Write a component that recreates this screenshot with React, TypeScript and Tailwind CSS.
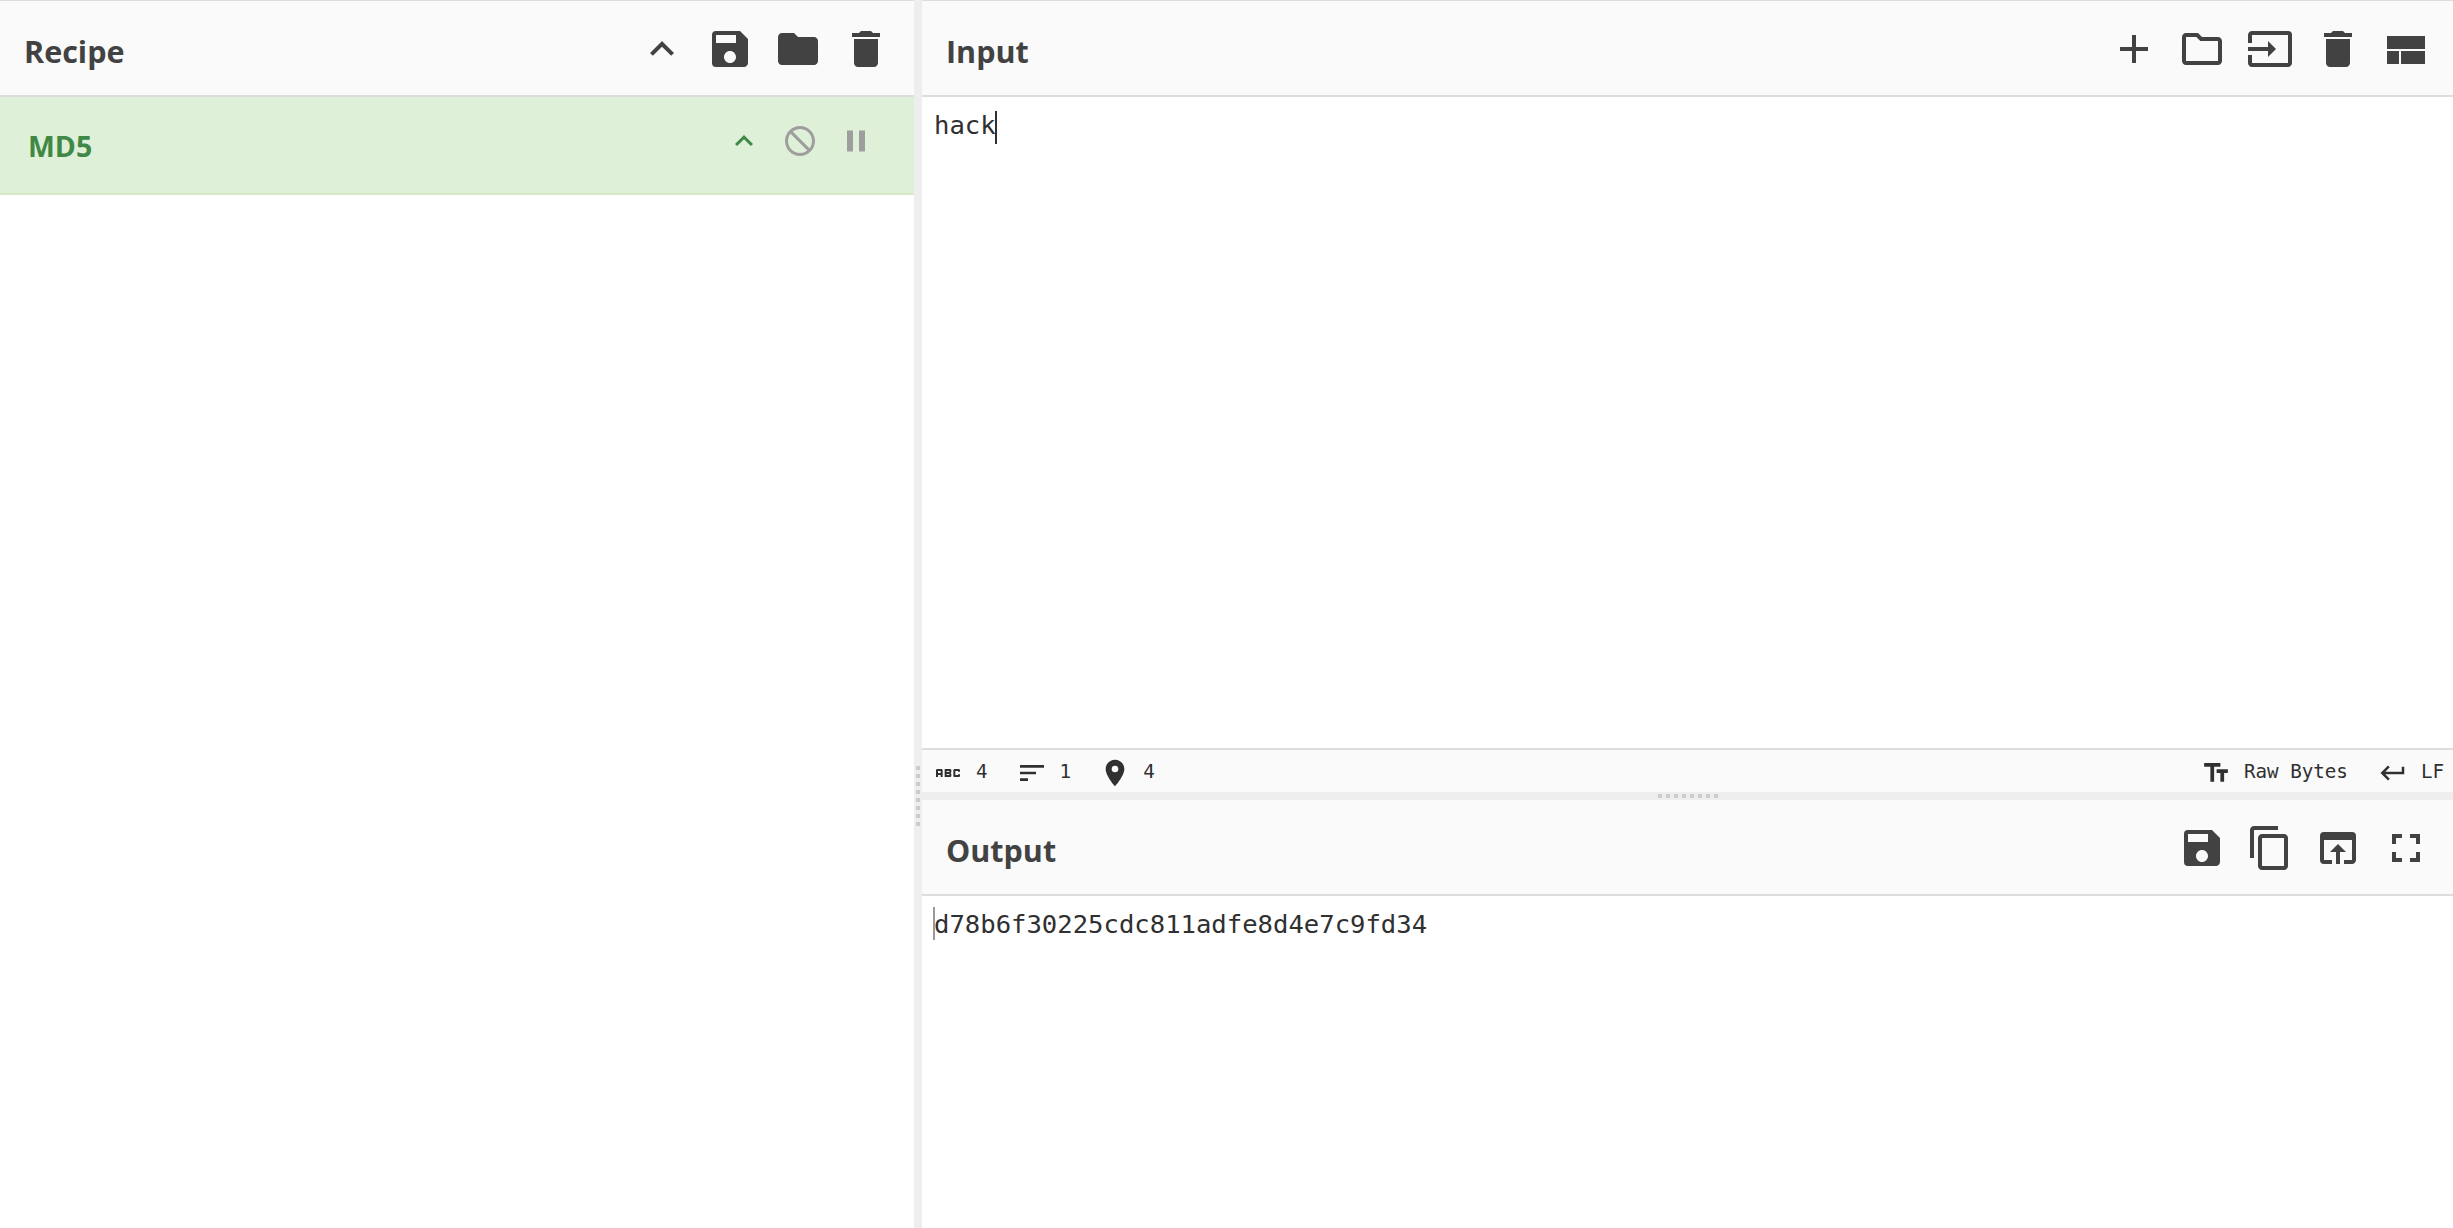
import type { ReactNode } from 'react';
import {
  MdAbc,
  MdAdd,
  MdContentCopy,
  MdDelete,
  MdDoNotDisturb,
  MdFolder,
  MdFullscreen,
  MdInput,
  MdKeyboardArrowUp,
  MdKeyboardReturn,
  MdLocationOn,
  MdOpenInBrowser,
  MdOutlineFolder,
  MdPause,
  MdSave,
  MdSort,
  MdTextFields,
} from 'react-icons/md';

const monoFont = "font-['DejaVu_Sans_Mono',monospace]";

function LayoutIcon() {
  return (
    <svg width="48" height="48" viewBox="0 0 48 48" fill="currentColor">
      <rect x="5" y="11" width="38" height="13" />
      <rect x="5" y="26" width="12" height="13" />
      <rect x="19" y="26" width="24" height="13" />
    </svg>
  );
}

function PanelHeader({ title, children, pr = 'pr-[23px]' }: { title: string; children: ReactNode; pr?: string }) {
  return (
    <div className={`flex h-[96px] items-center justify-between border-b-2 border-[#ddd] bg-[#fafafa] pl-[24px] pt-[1px] text-[#424242] ${pr}`}>
      <h2 className="pt-[6px] font-['Open_Sans',sans-serif] text-[30.5px] font-bold">{title}</h2>
      <div className="flex gap-[20px]">{children}</div>
    </div>
  );
}

function Stat({ icon, value }: { icon: ReactNode; value: string }) {
  return (
    <div className="flex items-center gap-[12px]">
      {icon}
      <span>{value}</span>
    </div>
  );
}

export default function App() {
  return (
    <div className="flex h-[1228px] w-[2453px] overflow-hidden bg-white text-[#303030]">
      <div className="flex w-[914px] flex-col border-t border-[#ddd]">
        <PanelHeader title="Recipe" pr="pr-[24px]">
          <MdKeyboardArrowUp size={48} />
          <MdSave size={48} />
          <MdFolder size={48} />
          <MdDelete size={48} />
        </PanelHeader>
        <div className="flex h-[98px] items-center justify-between border-b-2 border-[#d4e8c8] bg-[#dff0d8] pl-[28px] pr-[40px]">
          <span className="pt-[2px] font-['Open_Sans',sans-serif] text-[28.5px] font-bold text-[#408845]">MD5</span>
          <div className="-mt-[8px] flex gap-[20px] text-[#9e9e9e]">
            <MdKeyboardArrowUp size={36} className="text-[#408845]" />
            <MdDoNotDisturb size={36} />
            <MdPause size={36} />
          </div>
        </div>
      </div>

      <div className="relative w-[8px] bg-[#eee]">
        <div className="absolute left-[2px] top-[766px] flex flex-col gap-[4px]">
          {[0, 1, 2, 3, 4, 5, 6, 7].map((i) => (
            <div key={i} className="h-[4px] w-[4px] bg-[#ccc]" />
          ))}
        </div>
      </div>

      <div className="flex min-w-0 flex-1 flex-col border-t border-[#ddd]">
        <PanelHeader title="Input">
          <MdAdd size={48} />
          <MdOutlineFolder size={48} />
          <MdInput size={48} />
          <MdDelete size={48} />
          <LayoutIcon />
        </PanelHeader>

        <div className={`h-[651px] px-[12px] pt-[10px] text-[25.6px] leading-[36px] ${monoFont}`}>
          hack
          <span className="relative inline-block w-0">
            <span className="absolute -left-[1px] -top-[23px] h-[33px] w-[2px] bg-[#303030]" />
          </span>
        </div>

        <div className={`flex h-[44px] items-center justify-between border-t-2 border-[#ddd] bg-[#fafafa] pl-[10px] pr-[9px] pt-[3px] text-[19.2px] ${monoFont}`}>
          <div className="flex items-center gap-[28px]">
            <Stat icon={<MdAbc size={32} />} value="4" />
            <Stat icon={<MdSort size={32} />} value="1" />
            <Stat icon={<MdLocationOn size={32} />} value="4" />
          </div>
          <div className="flex items-center gap-[30px]">
            <div className="flex items-center gap-[13px]">
              <MdTextFields size={30} />
              <span>Raw Bytes</span>
            </div>
            <div className="flex items-center gap-[13px]">
              <MdKeyboardReturn size={30} />
              <span>LF</span>
            </div>
          </div>
        </div>

        <div className="flex h-[8px] justify-center gap-[4px] bg-[#eee]">
          {[0, 1, 2, 3, 4, 5, 6, 7].map((i) => (
            <div key={i} className="mt-[2px] h-[4px] w-[4px] bg-[#ccc]" />
          ))}
        </div>

        <PanelHeader title="Output">
          <MdSave size={48} />
          <MdContentCopy size={48} />
          <MdOpenInBrowser size={48} />
          <MdFullscreen size={48} />
        </PanelHeader>

        <div className={`relative px-[12px] pt-[10px] text-[25.6px] leading-[36px] ${monoFont}`}>
          <span className="absolute left-[11px] top-[11px] h-[33px] w-[2px] bg-[#999]" />
          d78b6f30225cdc811adfe8d4e7c9fd34
        </div>
      </div>
    </div>
  );
}
